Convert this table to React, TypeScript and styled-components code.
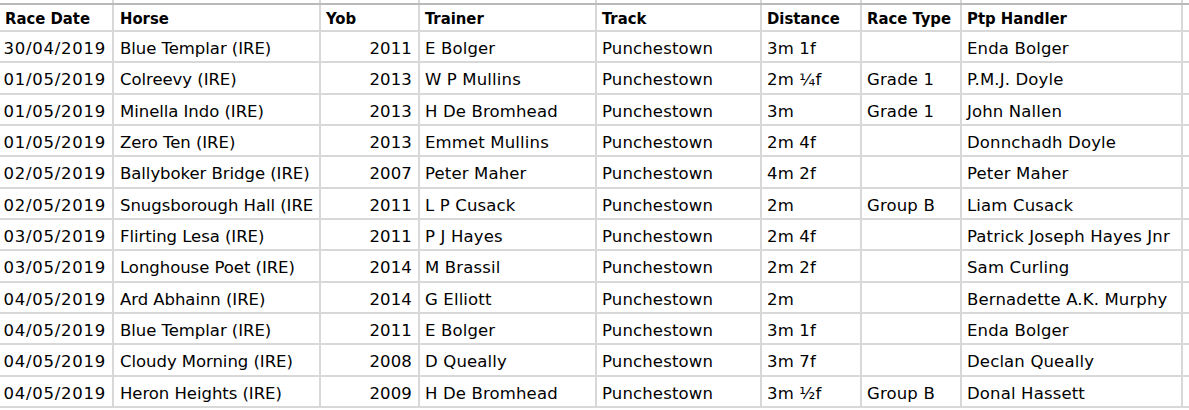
import React from "react";
import styled, { createGlobalStyle } from "styled-components";

const Global = createGlobalStyle`
  html, body { margin: 0; padding: 0; background: #ffffff; }
  body { font-family: "DejaVu Sans", "Liberation Sans", sans-serif; }
`;

const COLS = "114px 207px 99px 177px 165px 100px 100px 221px 1fr";
const LINE = "#d8d8d8";

type Row = {
  date: string;
  horse: string;
  yob: string;
  trainer: string;
  track: string;
  distance: string;
  raceType: string;
  handler: string;
};

const rows: Row[] = [
  { date: "30/04/2019", horse: "Blue Templar (IRE)", yob: "2011", trainer: "E Bolger", track: "Punchestown", distance: "3m 1f", raceType: "", handler: "Enda Bolger" },
  { date: "01/05/2019", horse: "Colreevy (IRE)", yob: "2013", trainer: "W P Mullins", track: "Punchestown", distance: "2m ¼f", raceType: "Grade 1", handler: "P.M.J. Doyle" },
  { date: "01/05/2019", horse: "Minella Indo (IRE)", yob: "2013", trainer: "H De Bromhead", track: "Punchestown", distance: "3m", raceType: "Grade 1", handler: "John Nallen" },
  { date: "01/05/2019", horse: "Zero Ten (IRE)", yob: "2013", trainer: "Emmet Mullins", track: "Punchestown", distance: "2m 4f", raceType: "", handler: "Donnchadh Doyle" },
  { date: "02/05/2019", horse: "Ballyboker Bridge (IRE)", yob: "2007", trainer: "Peter Maher", track: "Punchestown", distance: "4m 2f", raceType: "", handler: "Peter Maher" },
  { date: "02/05/2019", horse: "Snugsborough Hall (IRE)", yob: "2011", trainer: "L P Cusack", track: "Punchestown", distance: "2m", raceType: "Group B", handler: "Liam Cusack" },
  { date: "03/05/2019", horse: "Flirting Lesa (IRE)", yob: "2011", trainer: "P J Hayes", track: "Punchestown", distance: "2m 4f", raceType: "", handler: "Patrick Joseph Hayes Jnr" },
  { date: "03/05/2019", horse: "Longhouse Poet (IRE)", yob: "2014", trainer: "M Brassil", track: "Punchestown", distance: "2m 2f", raceType: "", handler: "Sam Curling" },
  { date: "04/05/2019", horse: "Ard Abhainn (IRE)", yob: "2014", trainer: "G Elliott", track: "Punchestown", distance: "2m", raceType: "", handler: "Bernadette A.K. Murphy" },
  { date: "04/05/2019", horse: "Blue Templar (IRE)", yob: "2011", trainer: "E Bolger", track: "Punchestown", distance: "3m 1f", raceType: "", handler: "Enda Bolger" },
  { date: "04/05/2019", horse: "Cloudy Morning (IRE)", yob: "2008", trainer: "D Queally", track: "Punchestown", distance: "3m 7f", raceType: "", handler: "Declan Queally" },
  { date: "04/05/2019", horse: "Heron Heights (IRE)", yob: "2009", trainer: "H De Bromhead", track: "Punchestown", distance: "3m ½f", raceType: "Group B", handler: "Donal Hassett" },
];

const Sheet = styled.div`
  width: 1189px;
  height: 410px;
  overflow: hidden;
  background: #ffffff;
  color: #000000;
  font-size: 16.5px;
  letter-spacing: 0.15px;
`;

const GridRow = styled.div<{ $h: number; $line: string }>`
  display: grid;
  grid-template-columns: ${COLS};
  height: ${(p) => p.$h}px;
  border-bottom: 2px solid ${(p) => p.$line};
`;

const Cell = styled.div<{ $align?: "left" | "right"; $pb: number; $spacing?: number }>`
  display: flex;
  align-items: flex-end;
  justify-content: ${(p) => (p.$align === "right" ? "flex-end" : "flex-start")};
  padding: 0 6px ${(p) => p.$pb}px 5px;
  border-right: 2px solid ${LINE};
  overflow: hidden;
  white-space: nowrap;
  line-height: 1.2;
  box-sizing: border-box;
  ${(p) => (p.$spacing !== undefined ? `letter-spacing: ${p.$spacing}px;` : "")}
  &:nth-child(2) { padding-left: 6px; }
`;

const HeadCell = styled(Cell)`
  font-family: "DejaVu Sans Condensed", "Liberation Sans", sans-serif;
  font-weight: 700;
  letter-spacing: 0;
`;

const Clip = styled.span<{ $max: number }>`
  display: block;
  max-width: ${(p) => p.$max}px;
  overflow: hidden;
  line-height: 1.2;
`;

const headers = ["Race Date", "Horse", "Yob", "Trainer", "Track", "Distance", "Race Type", "Ptp Handler", ""];

export default function App() {
  return (
    <>
      <Global />
      <Sheet>
        <GridRow $h={3} $line="#b9b9b9">
          {headers.map((_, i) => (
            <Cell key={i} $pb={0} />
          ))}
        </GridRow>
        <GridRow $h={25} $line={LINE}>
          {headers.map((h, i) => (
            <HeadCell key={i} $pb={1}>
              {h}
            </HeadCell>
          ))}
        </GridRow>
        {rows.map((r, i) => (
          <GridRow key={i} $h={29.33} $line={LINE}>
            <Cell $align="right" $pb={2.5} $spacing={0.75}>{r.date}</Cell>
            <Cell $pb={2.5} $spacing={-0.05}>
              <Clip $max={199}>{r.horse}</Clip>
            </Cell>
            <Cell $align="right" $pb={2.5}>{r.yob}</Cell>
            <Cell $pb={2.5}>{r.trainer}</Cell>
            <Cell $pb={2.5}>{r.track}</Cell>
            <Cell $pb={2.5}>{r.distance}</Cell>
            <Cell $pb={2.5}>{r.raceType}</Cell>
            <Cell $pb={2.5}>{r.handler}</Cell>
            <Cell $pb={2.5} />
          </GridRow>
        ))}
      </Sheet>
    </>
  );
}
